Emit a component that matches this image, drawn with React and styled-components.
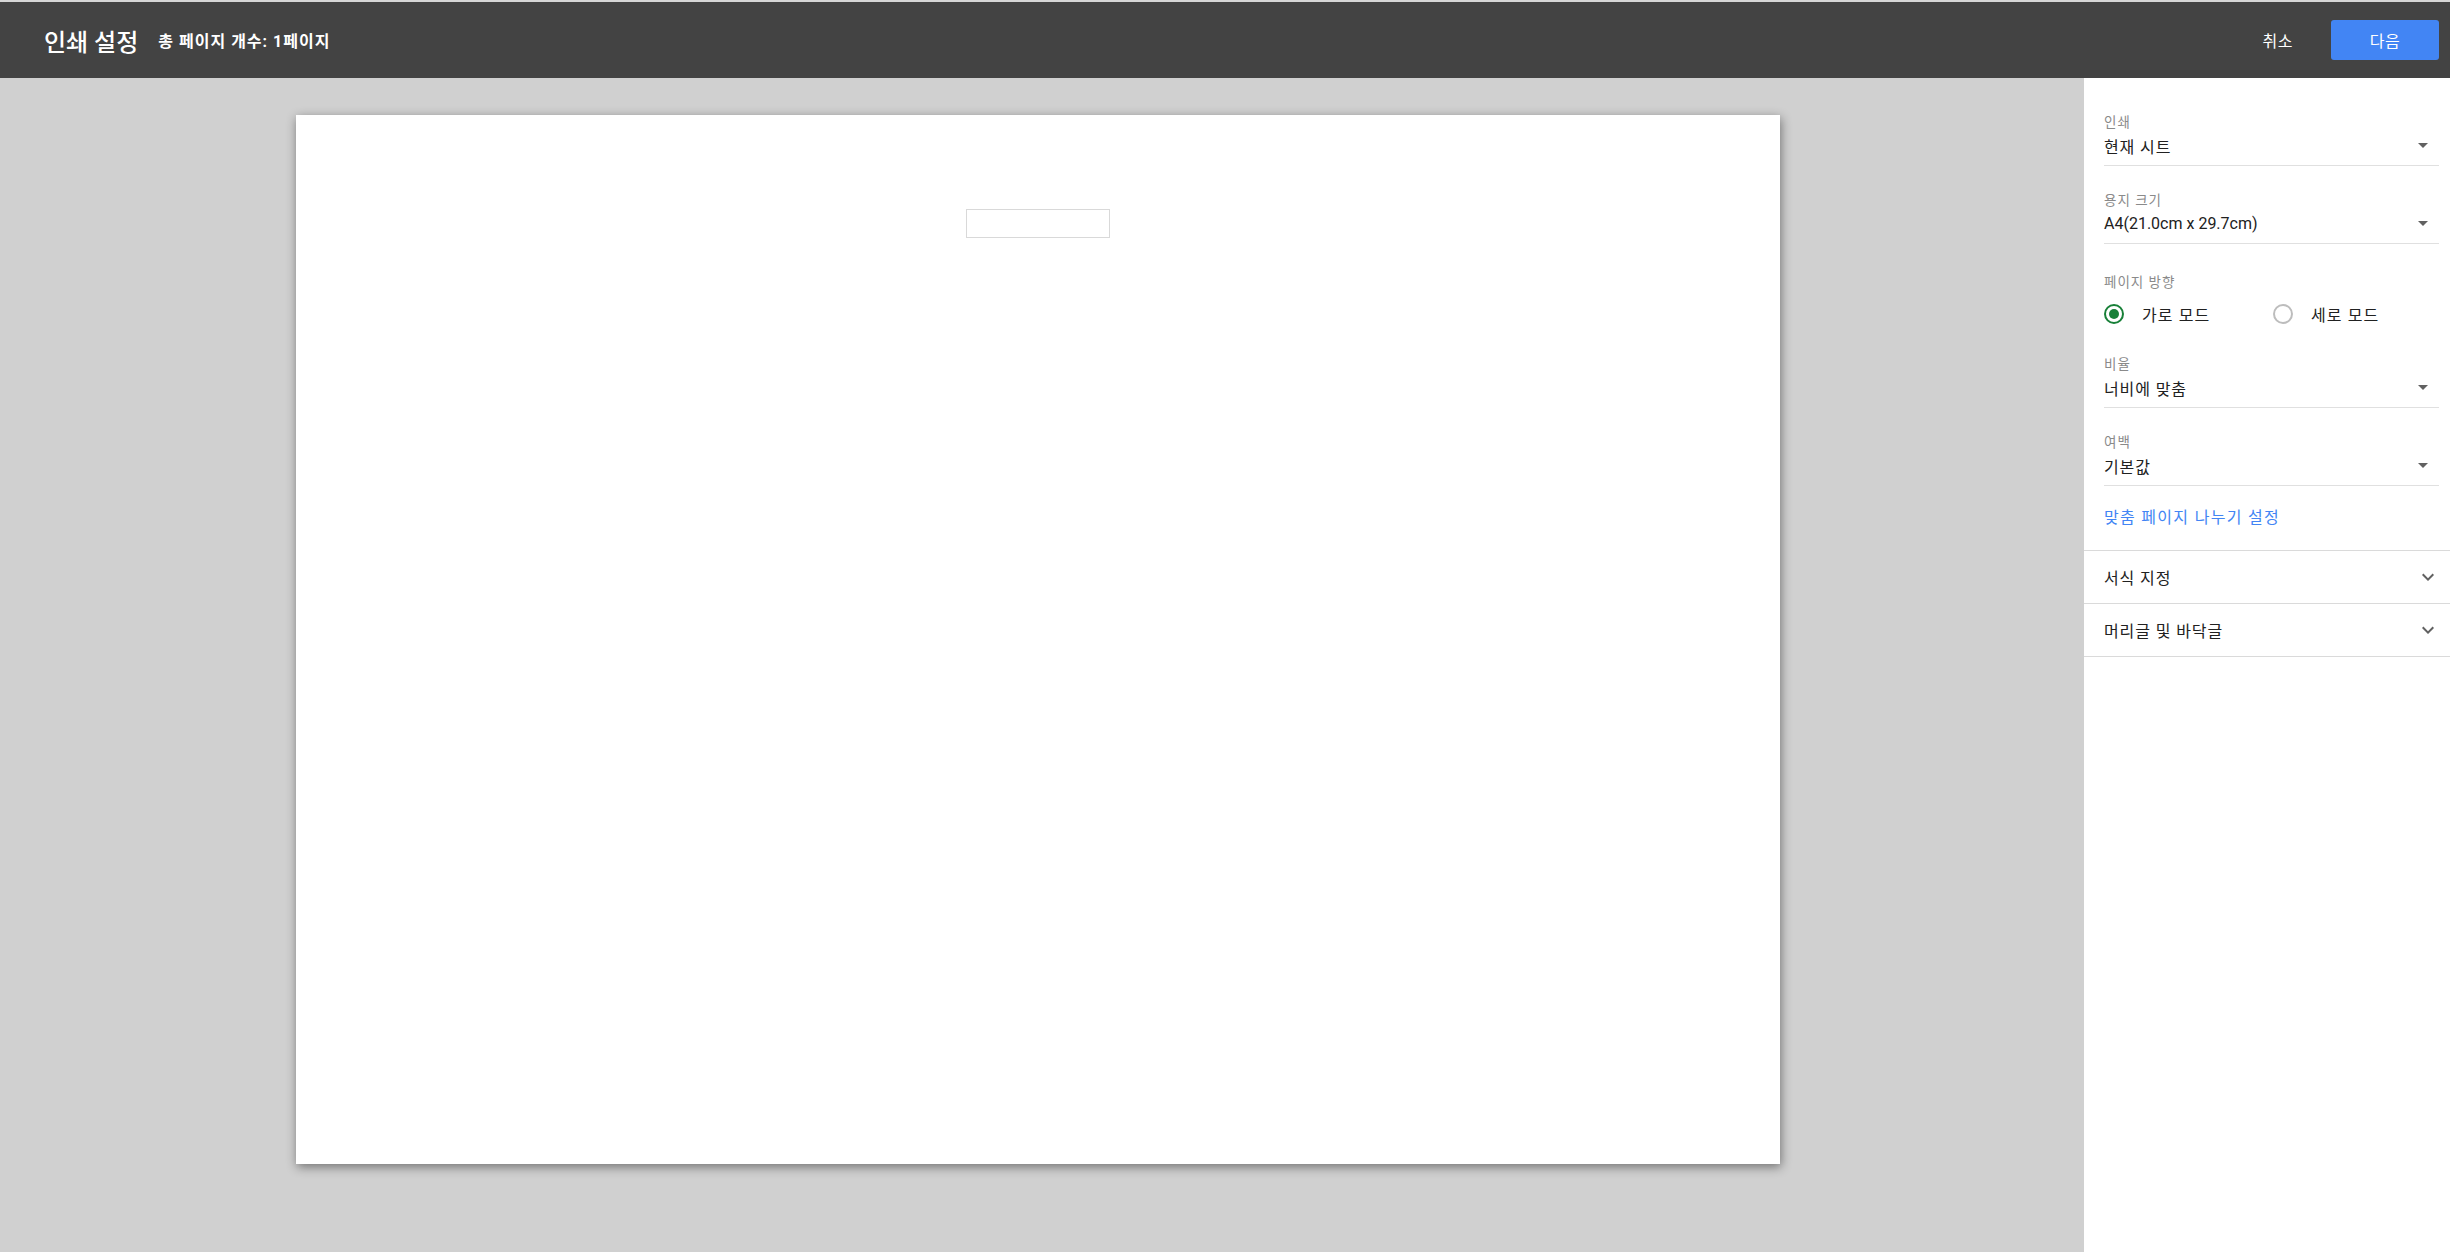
import React from "react";
import styled, { createGlobalStyle } from "styled-components";

const GlobalStyle = createGlobalStyle`
  html, body { margin: 0; padding: 0; height: 100%; }
  body {
    font-family: Roboto, "Noto Sans CJK KR", "Noto Sans", sans-serif;
    background: #d0d0d0;
  }
  #root { height: 100%; }
  * { box-sizing: border-box; }
`;

const Shell = styled.div`
  display: flex;
  flex-direction: column;
  width: 100%;
  height: 100vh;
  overflow: hidden;
`;

const Header = styled.header`
  flex: 0 0 78px;
  display: flex;
  align-items: center;
  background: #434343;
  border-top: 2px solid #d6d6d6;
  padding: 0 11px 0 44px;
  color: #fff;
`;

const Title = styled.h1`
  margin: 0;
  font-size: 24px;
  font-weight: 500;
  color: #fff;
`;

const Subtitle = styled.span`
  margin-left: 20px;
  font-size: 16px;
  font-weight: 700;
  color: #fff;
  letter-spacing: 1px;
`;

const Spacer = styled.div`
  flex: 1;
`;

const TextButton = styled.button`
  background: none;
  border: none;
  color: #fff;
  font-family: inherit;
  font-size: 16px;
  letter-spacing: 0.5px;
  padding: 0 8px;
  margin-right: 30px;
  height: 40px;
  cursor: pointer;
`;

const PrimaryButton = styled.button`
  width: 108px;
  height: 40px;
  border: none;
  border-radius: 3px;
  background: #4285f4;
  color: #fff;
  font-family: inherit;
  font-size: 16px;
  letter-spacing: 0.5px;
  cursor: pointer;
`;

const Body = styled.div`
  flex: 1;
  display: flex;
  min-height: 0;
`;

const Preview = styled.main`
  flex: 1;
  display: flex;
  justify-content: center;
  align-items: flex-start;
  padding: 37px 8px 0 0;
  background: #d0d0d0;
`;

const Paper = styled.div`
  width: 1484px;
  height: 1049px;
  background: #fff;
  box-shadow: 1px 3px 10px rgba(0, 0, 0, 0.45);
  display: flex;
  flex-direction: column;
  align-items: center;
  padding-top: 94px;
`;

const Cell = styled.div`
  width: 144px;
  height: 29px;
  border: 1px solid #d9d9d9;
`;

const Sidebar = styled.aside`
  flex: 0 0 366px;
  background: #fff;
  padding-top: 34px;
  display: flex;
  flex-direction: column;
`;

const Section = styled.div`
  display: flex;
  flex-direction: column;
  padding: 0 11px 0 20px;
`;

const Field = styled.div`
  display: flex;
  flex-direction: column;
  padding-top: 2px;
  margin-bottom: ${(p) => p.$mb ?? 24}px;
`;

const Label = styled.div`
  font-size: 13.5px;
  line-height: 16px;
  letter-spacing: 1px;
  color: #8a8a8a;
  margin-top: ${(p) => p.$mt ?? 0}px;
`;

const SelectRow = styled.div`
  display: flex;
  align-items: center;
  justify-content: space-between;
  height: 36px;
  padding: 0 11px 4px 0;
  border-bottom: 1px solid #e0e0e0;
  font-size: 16px;
  letter-spacing: ${(p) => (p.$latin ? 0 : 0.9)}px;
  color: #212121;
`;

const Caret = styled.span`
  width: 0;
  height: 0;
  border-left: 5px solid transparent;
  border-right: 5px solid transparent;
  border-top: 5px solid #616161;
`;

const RadioRow = styled.div`
  display: flex;
  align-items: center;
  height: 38px;
  margin-top: 5px;
  margin-bottom: 21px;
`;

const RadioOption = styled.label`
  display: flex;
  align-items: center;
  width: ${(p) => p.$w}px;
  font-size: 16px;
  letter-spacing: 1.1px;
  color: #212121;
  cursor: pointer;
`;

const RadioCircle = styled.span`
  width: 20px;
  height: 20px;
  border-radius: 50%;
  border: 2px solid ${(p) => (p.$checked ? "#188038" : "#bdbdbd")};
  display: flex;
  align-items: center;
  justify-content: center;
  margin-right: 18px;
  &::after {
    content: "";
    width: 10px;
    height: 10px;
    border-radius: 50%;
    background: ${(p) => (p.$checked ? "#188038" : "transparent")};
  }
`;

const LinkText = styled.a`
  display: block;
  margin: 22px 0 22px;
  line-height: 20px;
  font-size: 16px;
  letter-spacing: 1.3px;
  color: #4285f4;
  text-decoration: none;
  cursor: pointer;
`;

const Accordion = styled.div`
  border-top: 1px solid #dadada;
`;

const AccordionRow = styled.div`
  display: flex;
  align-items: center;
  justify-content: space-between;
  height: 53px;
  padding: 0 10px 0 20px;
  border-bottom: 1px solid #dadada;
  font-size: 16px;
  letter-spacing: 0.9px;
  color: #212121;
  cursor: pointer;
`;

const Chevron = () => (
  <svg width="24" height="24" viewBox="0 0 24 24" aria-hidden="true">
    <path d="M7.41 8.59 12 13.17l4.59-4.58L18 10l-6 6-6-6z" fill="#616161" />
  </svg>
);

function Select({ label, value, mb, latin }) {
  return (
    <Field $mb={mb}>
      <Label>{label}</Label>
      <SelectRow $latin={latin}>
        <span>{value}</span>
        <Caret />
      </SelectRow>
    </Field>
  );
}

export default function App() {
  return (
    <>
      <GlobalStyle />
      <Shell>
        <Header>
          <Title>인쇄 설정</Title>
          <Subtitle>총 페이지 개수: 1페이지</Subtitle>
          <Spacer />
          <TextButton>취소</TextButton>
          <PrimaryButton>다음</PrimaryButton>
        </Header>
        <Body>
          <Preview>
            <Paper>
              <Cell />
            </Paper>
          </Preview>
          <Sidebar>
            <Section>
              <Select label="인쇄" value="현재 시트" />
              <Select label="용지 크기" value="A4(21.0cm x 29.7cm)" latin />
              <Label $mt={6}>페이지 방향</Label>
              <RadioRow>
                <RadioOption $w={169}>
                  <RadioCircle $checked />
                  가로 모드
                </RadioOption>
                <RadioOption $w={150}>
                  <RadioCircle />
                  세로 모드
                </RadioOption>
              </RadioRow>
              <Select label="비율" value="너비에 맞춤" />
              <Select label="여백" value="기본값" mb={0} />
              <LinkText>맞춤 페이지 나누기 설정</LinkText>
            </Section>
            <Accordion>
              <AccordionRow>
                <span>서식 지정</span>
                <Chevron />
              </AccordionRow>
              <AccordionRow>
                <span>머리글 및 바닥글</span>
                <Chevron />
              </AccordionRow>
            </Accordion>
          </Sidebar>
        </Body>
      </Shell>
    </>
  );
}
